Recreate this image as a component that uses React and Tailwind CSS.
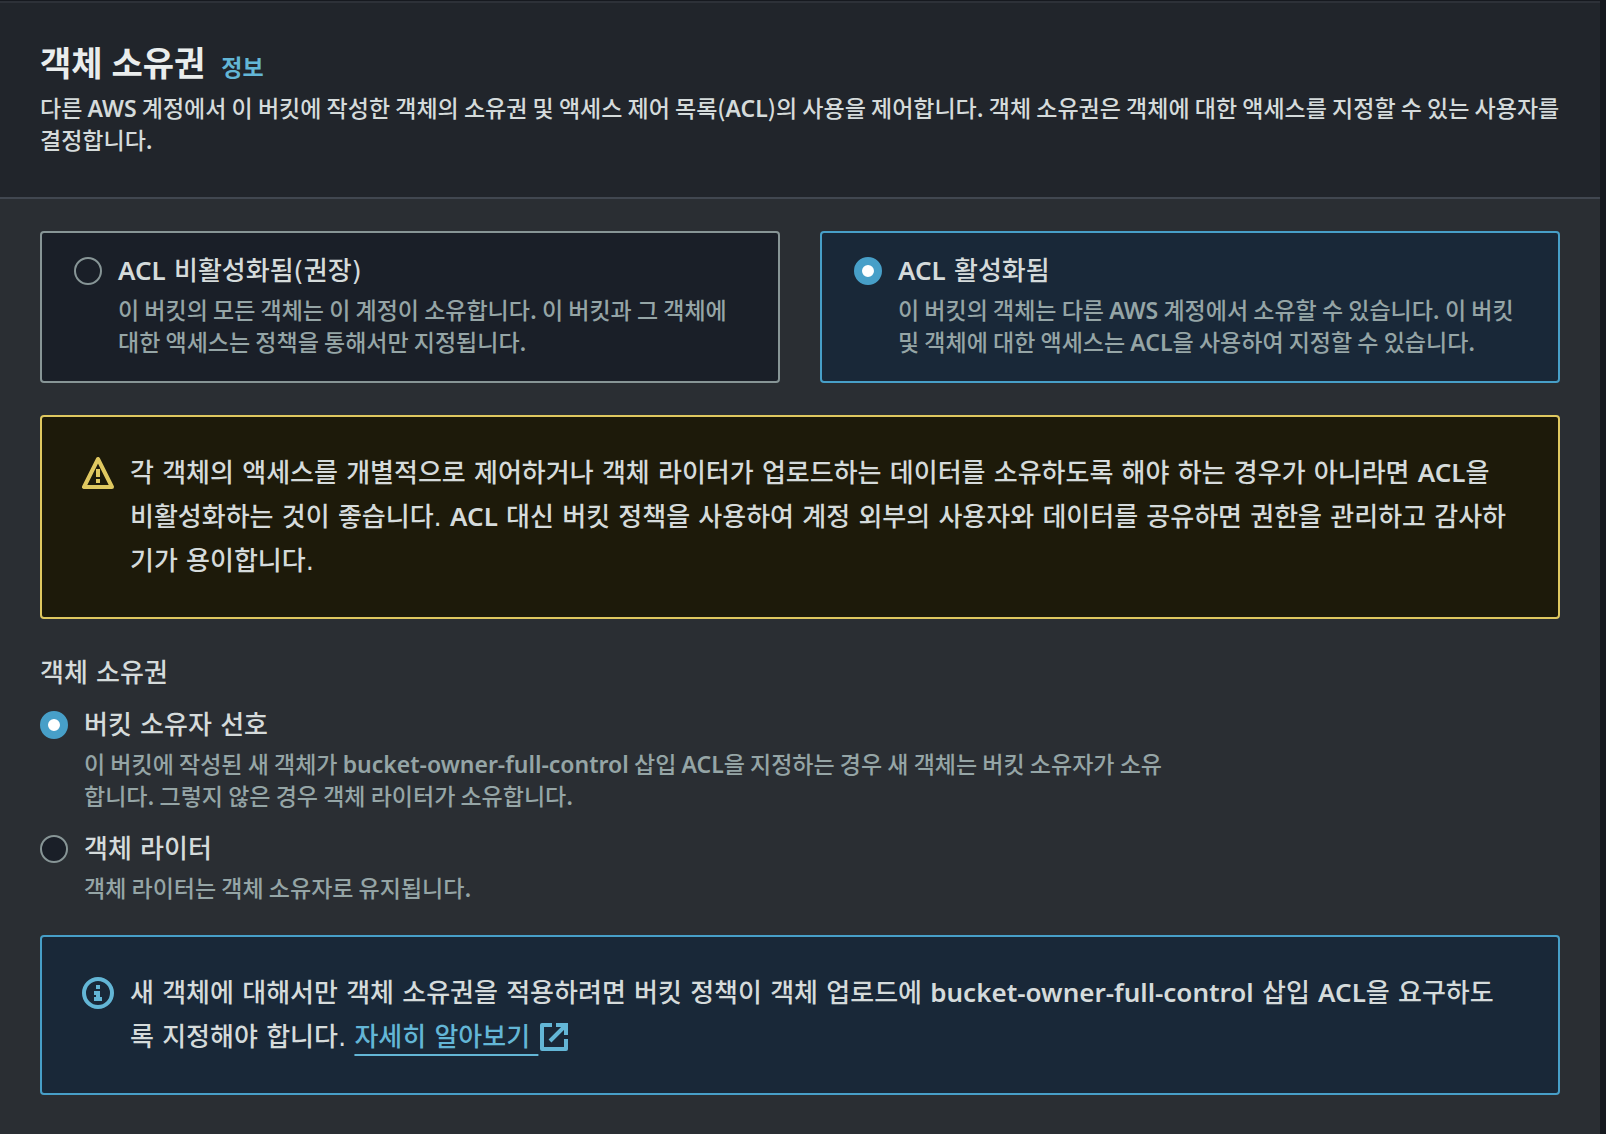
import React, { useState } from "react";

function WarningIcon() {
  return (
    <svg viewBox="0 0 32 32" className="mt-1.5 size-8 shrink-0" fill="none" stroke="#dfc860" aria-hidden="true">
      <path d="M16 2 2 30h28L16 2Z" strokeWidth="4" strokeLinejoin="round" />
      <path d="M16 12v8M16 22v4" strokeWidth="4" />
    </svg>
  );
}

function InfoIcon() {
  return (
    <svg viewBox="0 0 32 32" className="mt-1.5 size-8 shrink-0" fill="none" stroke="#63b6d6" aria-hidden="true">
      <circle cx="16" cy="16" r="14" strokeWidth="4" />
      <path d="M16 8v4" strokeWidth="4" />
      <path d="M12 16h6M12 22h8M16 15v8" strokeWidth="4" />
    </svg>
  );
}

function ExternalIcon() {
  return (
    <svg viewBox="0 0 28 28" className="ml-0.5 inline-block size-7 align-[-5px]" fill="none" stroke="#63b6d6" strokeWidth="4" aria-hidden="true">
      <path d="M12 2H2v24h24V16" strokeLinejoin="round" />
      <path d="M16 2h10v10M26 2 10 18" />
    </svg>
  );
}

function Latin({ children }) {
  return <span className="font-['Noto_Sans',sans-serif] leading-none font-semibold">{children}</span>;
}

function RadioOption({ name, value, selected, onChange, title, children, className = "" }) {
  const id = `${name}-${value}`;
  return (
    <div className={`flex ${className}`}>
      <input
        type="radio"
        id={id}
        name={name}
        checked={selected === value}
        onChange={() => onChange(value)}
        aria-describedby={`${id}-description`}
        className="mt-2 size-7 shrink-0 appearance-none rounded-full border-2 border-[#879596] bg-[#1a1f28] checked:border-8 checked:border-[#479fc8] checked:bg-white"
      />
      <div className="ml-4 min-w-0">
        <label htmlFor={id} className="block font-['DejaVu_Sans','Noto_Sans_CJK_KR',sans-serif] text-[26px] leading-11">
          {title}
        </label>
        <p id={`${id}-description`} className="text-[23px] leading-8 text-[#95a5a6]">
          {children}
        </p>
      </div>
    </div>
  );
}

export default function App() {
  const [acl, setAcl] = useState("enabled");
  const [owner, setOwner] = useState("preferred");

  return (
    <div className="min-h-screen bg-[#16191f] pt-px pr-1.5 font-['Noto_Sans_CJK_KR',sans-serif] font-medium text-[#d5dbdb]">
      <section className="border-t-2 border-[#2d3138] bg-[#2a2e33]">
        <header className="border-b-2 border-[#414750] bg-[#21252b] px-10 pt-[38px] pb-[42px]">
          <div className="flex items-baseline gap-4 font-['Noto_Sans','Noto_Sans_CJK_KR',sans-serif]">
            <h2 className="text-[34px] leading-11 font-bold text-[#eaeded]">객체 소유권</h2>
            <a href="#info" className="text-[23px] leading-8 font-bold text-[#63b6d6]">
              정보
            </a>
          </div>
          <p className="mt-1.5 text-[23px] leading-8">
            다른 <Latin>AWS</Latin> 계정에서 이 버킷에 작성한 객체의 소유권 및 액세스 제어 목록(<Latin>ACL</Latin>)의
            사용을 제어합니다. 객체 소유권은 객체에 대한 액세스를 지정할 수 있는 사용자를 결정합니다.
          </p>
        </header>

        <div className="flex flex-col gap-8 px-10 pt-8 pb-10">
          <div role="radiogroup" aria-label="ACL" className="grid grid-cols-2 gap-10">
            <RadioOption
              name="acl"
              value="disabled"
              selected={acl}
              onChange={setAcl}
              title={<><Latin>ACL</Latin> 비활성화됨(권장)</>}
              className="rounded-sm border-2 border-[#879596] bg-[#1a1f28] px-8 pt-4 pb-6"
            >
              이 버킷의 모든 객체는 이 계정이 소유합니다. 이 버킷과 그 객체에 대한 액세스는 정책을 통해서만 지정됩니다.
            </RadioOption>
            <RadioOption
              name="acl"
              value="enabled"
              selected={acl}
              onChange={setAcl}
              title={<><Latin>ACL</Latin> 활성화됨</>}
              className="rounded-sm border-2 border-[#479fc8] bg-[#192838] px-8 pt-4 pb-6"
            >
              이 버킷의 객체는 다른 <Latin>AWS</Latin> 계정에서 소유할 수 있습니다. 이 버킷 및 객체에 대한 액세스는{" "}
              <Latin>ACL</Latin>을 사용하여 지정할 수 있습니다.
            </RadioOption>
          </div>

          <div role="status" className="flex gap-4 rounded-sm border-2 border-[#dfc860] bg-[#1d1a0a] py-[34px] pr-12 pl-10">
            <WarningIcon />
            <p className="font-['DejaVu_Sans','Noto_Sans_CJK_KR',sans-serif] text-[26px] leading-11">
              각 객체의 액세스를 개별적으로 제어하거나 객체 라이터가 업로드하는 데이터를 소유하도록 해야 하는 경우가
              아니라면 <Latin>ACL</Latin>을 비활성화하는 것이 좋습니다. <Latin>ACL</Latin> 대신 버킷 정책을 사용하여 계정
              외부의 사용자와 데이터를 공유하면 권한을 관리하고 감사하기가 용이합니다.
            </p>
          </div>

          <fieldset>
            <legend className="font-['DejaVu_Sans','Noto_Sans_CJK_KR',sans-serif] text-[26px] leading-11">객체 소유권</legend>
            <div className="flex max-w-[1130px] flex-col gap-4 pt-2">
              <RadioOption name="owner" value="preferred" selected={owner} onChange={setOwner} title="버킷 소유자 선호">
                이 버킷에 작성된 새 객체가 <Latin>bucket-owner-full-control</Latin> 삽입 <Latin>ACL</Latin>을 지정하는
                경우 새 객체는 버킷 소유자가 소유합니다. 그렇지 않은 경우 객체 라이터가 소유합니다.
              </RadioOption>
              <RadioOption name="owner" value="writer" selected={owner} onChange={setOwner} title="객체 라이터">
                객체 라이터는 객체 소유자로 유지됩니다.
              </RadioOption>
            </div>
          </fieldset>

          <div role="status" className="flex gap-4 rounded-sm border-2 border-[#479fc8] bg-[#192838] py-[34px] pr-12 pl-10">
            <InfoIcon />
            <p className="font-['DejaVu_Sans','Noto_Sans_CJK_KR',sans-serif] text-[26px] leading-11">
              새 객체에 대해서만 객체 소유권을 적용하려면 버킷 정책이 객체 업로드에{" "}
              <Latin>bucket-owner-full-control</Latin> 삽입 <Latin>ACL</Latin>을 요구하도록 지정해야 합니다.{" "}
              <a href="#learn-more" className="whitespace-nowrap text-[#63b6d6]">
                <span className="underline decoration-2 underline-offset-8">자세히 알아보기&nbsp;</span>
                <ExternalIcon />
              </a>
            </p>
          </div>
        </div>
      </section>
    </div>
  );
}
